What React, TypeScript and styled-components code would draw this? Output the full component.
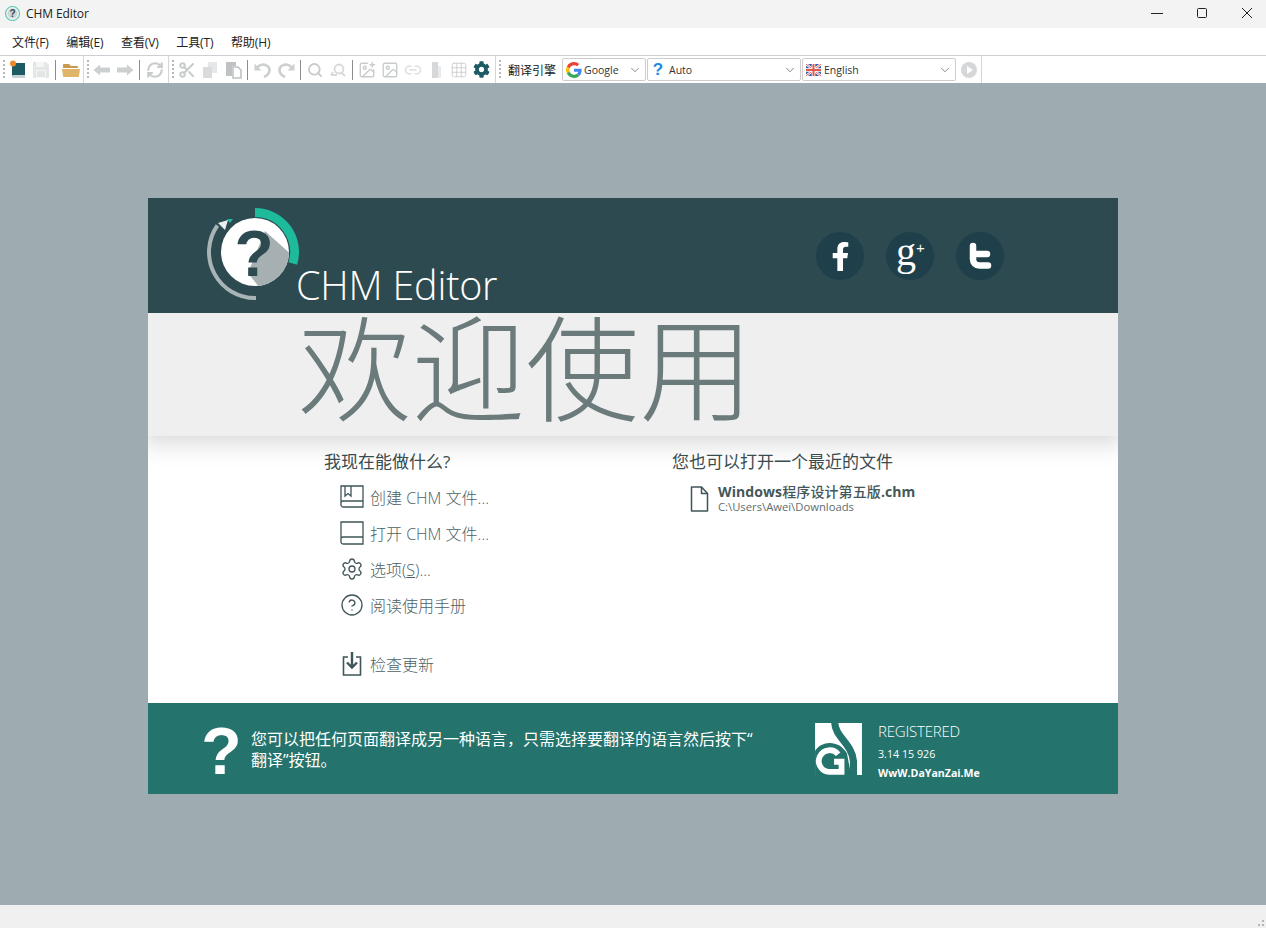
import React from "react";
import styled, { createGlobalStyle } from "styled-components";
import {
  RefreshCw, Scissors, Search, Image as ImageIcon, ImagePlus, Link2, Grid3x3, Settings, CircleHelp, ChevronDown,
} from "lucide-react";
import { FaFacebookF, FaCog } from "react-icons/fa";

const SANS = `"Open Sans", "Noto Sans CJK SC", sans-serif`;

const Global = createGlobalStyle`
  html, body { margin: 0; padding: 0; height: 100%; }
  body { font-family: ${SANS}; background: #f0f0f0; overflow: hidden; }
  #root { height: 928px; }
`;

const Win = styled.div`
  width: 1266px; height: 928px; display: flex; flex-direction: column;
`;
const TitleBar = styled.div`
  height: 28px; background: #f3f3f3; display: flex; align-items: center;
  padding: 0 3px 2px 5px; box-sizing: border-box; font-size: 12px; color: #222;
`;
const AppName = styled.span`
  margin-left: 6px; flex: 1; letter-spacing: -0.1px;
`;
const WinButtons = styled.div`
  display: flex; gap: 13px;
`;
const WinButton = styled.div`
  width: 32px; height: 24px; display: flex; align-items: center; justify-content: center;
`;
const MenuBar = styled.div`
  height: 27px; background: #fff; display: flex; align-items: center; padding-left: 4px;
  border-bottom: 1px solid #cfcfcf; box-sizing: content-box;
  font-size: 12px; color: #222; letter-spacing: -0.1px;
`;
const MenuItem = styled.span`
  padding: 0 8px; margin-right: 1.5px; white-space: nowrap;
`;
const Toolbar = styled.div`
  height: 27px; background: #fff; display: flex; box-sizing: border-box;
`;
const Band = styled.div<{ $w: number }>`
  width: ${(p) => p.$w}px; box-sizing: border-box; display: flex; align-items: center;
  border-right: 1px solid #d6d6d6; padding-left: 3px;
`;
const Grip = styled.div`
  width: 2px; height: 19px; margin-right: 1px;
  background: repeating-linear-gradient(to bottom, #b8b8b8 0 2px, transparent 2px 4px);
`;
const ToolButton = styled.div<{ $tone?: string }>`
  width: 23px; height: 24px; flex: none; display: flex; align-items: center; justify-content: center;
  color: ${(p) => p.$tone ?? "#c9cccd"};
`;
const ToolSep = styled.div<{ $r?: number }>`
  width: 1px; height: 20px; background: #8c8c8c; margin: 0 ${(p) => p.$r ?? 3}px 0 3px; flex: none;
`;
const EngineLabel = styled.span`
  font-size: 12px; color: #222; margin: 0 6px 0 6px; white-space: nowrap;
`;
const Combo = styled.div<{ $w: number }>`
  width: ${(p) => p.$w}px; height: 23px; box-sizing: border-box; flex: none;
  border: 1px solid #cdcdcd; border-radius: 2px; background: #fff; margin-right: 1px;
  display: flex; align-items: center; padding: 0 3px; font-size: 10.5px; color: #333;
`;
const ComboText = styled.span<{ $l: number }>`
  flex: 1; margin-left: ${(p) => p.$l}px;
`;
const QuestionGlyph = styled.span`
  width: 14px; text-align: center; font-family: "Liberation Sans", sans-serif; font-weight: 700; font-size: 17px;
  color: #1e88e5; line-height: 1;
`;
const Workspace = styled.div`
  flex: 1; background: #9eabb0; padding-top: 115px; display: flex; flex-direction: column; align-items: center;
`;
const Card = styled.div`
  width: 970px; height: 596px; display: flex; flex-direction: column; background: #fff;
`;
const Header = styled.div`
  height: 115px; background: #2d4a50; display: flex; padding-left: 57px; box-sizing: border-box;
`;
const Logo = styled.svg`
  width: 96px; height: 96px; margin-top: 8px; flex: none;
`;
const ProductTitle = styled.div`
  align-self: flex-end; margin-left: -5px; margin-bottom: 1px; font-size: 39.5px; font-weight: 300; color: #fff;
  line-height: 54px; letter-spacing: -0.2px;
`;
const Socials = styled.div`
  margin-left: auto; margin-right: 114px; display: flex; gap: 22px; align-items: center; padding-top: 1px;
`;
const SocialDisc = styled.div`
  width: 48px; height: 48px; border-radius: 50%; background: #1f3f4b; color: #fff;
  display: flex; align-items: center; justify-content: center;
`;
const GPlus = styled.span`
  font-family: "Liberation Serif", serif; font-size: 40px; line-height: 1; margin-top: -9px; margin-left: 1px;
  sup { font-family: "Liberation Sans", sans-serif; font-size: 15px; vertical-align: 12px; line-height: 0; }
`;
const Banner = styled.div`
  height: 123px; background: #efefef; padding-left: 150px; box-sizing: border-box; position: relative; z-index: 1;
  box-shadow: 0 0 24px 6px rgba(0, 0, 0, 0.17); clip-path: inset(0 0 -40px 0);
  font-family: "Noto Sans CJK SC", sans-serif; font-weight: 300; font-size: 113.800px; line-height: 100px; color: #6b7a7b;
  white-space: nowrap;
`;
const Content = styled.div`
  flex: 1; display: grid; grid-template-columns: 348px 1fr; padding: 14px 0 0 176px; box-sizing: border-box;
`;
const Heading = styled.div`
  font-size: 17px; line-height: 24px; color: #3b4d50; white-space: nowrap;
`;
const ActionList = styled.div`
  margin: 5px 0 0 16px; display: flex; flex-direction: column;
`;
const Action = styled.div<{ $gap?: number }>`
  height: 36px; display: flex; align-items: center; gap: 6px; font-size: 16px; color: #4d6164; white-space: nowrap;
  margin-top: ${(p) => p.$gap ?? 0}px; font-weight: 300;
  svg { width: 24px; height: 24px; flex: none; color: #3f5559; }
`;
const RecentRow = styled.div`
  display: flex; margin: 10px 0 0 18px; gap: 9px;
  svg { width: 19px; height: 26px; color: #3f5559; margin-top: 2px; flex: none; }
`;
const RecentText = styled.div`
  display: flex; flex-direction: column;
`;
const RecentName = styled.span`
  font-size: 14px; line-height: 16px; font-weight: 500; color: #44575a; white-space: nowrap; letter-spacing: 0.1px;
`;
const RecentLatin = styled.span`
  font-weight: 700;
`;
const RecentPath = styled.span`
  font-size: 11.250px; line-height: 13px; color: #5d6d6f; white-space: nowrap;
`;
const Footer = styled.div`
  height: 91px; background: #24736c; color: #fff; display: flex; align-items: center; padding-left: 49px; box-sizing: border-box;
`;
const BigQ = styled.div`
  width: 54px; font-family: "Liberation Sans", sans-serif; font-size: 66px; font-weight: 700; line-height: 67px; flex: none;
  margin-top: 5px; text-align: center; box-sizing: border-box; padding-right: 5px;
`;
const Tip = styled.div`
  width: 564px; flex: none; font-size: 16px; line-height: 21px; margin-top: 2px; white-space: nowrap;
`;
const Mark = styled.svg`
  width: 47px; height: 52px; flex: none; margin-top: 1px;
`;
const Meta = styled.div`
  margin-left: 16px; display: flex; flex-direction: column; margin-top: 6px;
`;
const Reg = styled.span`
  font-size: 15px; line-height: 20px; font-weight: 300; white-space: nowrap; letter-spacing: -0.2px;
`;
const Serial = styled.span`
  font-size: 10.700px; line-height: 20px; margin-top: 3px; white-space: nowrap;
`;
const Site = styled.span`
  font-size: 10.600px; line-height: 18px; font-weight: 700; white-space: nowrap;
`;
const StatusBar = styled.div`
  height: 22px; background: #f0f0f0; display: flex; justify-content: flex-end; align-items: flex-end; padding: 0 1px 1px 0;
`;

const BookIcon = () => (
  <svg width="18" height="19" viewBox="0 0 18 19">
    <path d="M4 3h12v12H4z" fill="#1e5a63" />
    <path d="M3 4h2v13H3z" fill="#1e5a63" />
    <path d="M4 15h12v3H5a1.500 1.500 0 0 1-1-3z" fill="#c8d2d4" />
    <circle cx="4" cy="3.500" r="3" fill="#f08a2c" />
  </svg>
);
const SaveIcon = () => (
  <svg width="18" height="18" viewBox="0 0 18 18">
    <path d="M1 1h13l3 3v13H1z" fill="#e3e5e6" />
    <path d="M4 1h8v5H4z" fill="#f4f5f5" />
    <path d="M4 9h10v8H4z" fill="#f4f5f5" />
    <path d="M5 11h8M5 13h8M5 15h8" stroke="#d4d6d7" />
  </svg>
);
const FolderIcon = () => (
  <svg width="18" height="16" viewBox="0 0 18 16">
    <path d="M1 3a1 1 0 0 1 1-1h5l2 2h6a1 1 0 0 1 1 1v1H1z" fill="#c99a4c" />
    <path d="M0 7h18l-1 7a1 1 0 0 1-1 1H2a1 1 0 0 1-1-1z" fill="#e0b469" />
  </svg>
);
const BlockArrow = ({ flip }: { flip?: boolean }) => (
  <svg width="18" height="12" viewBox="0 0 18 12" style={flip ? { transform: "scaleX(-1)" } : undefined}>
    <path d="M0.500 6L7 0.500V3.500H17V8.500H7V11.500Z" fill="#cdd0d1" />
  </svg>
);
const CopyIcon = () => (
  <svg width="18" height="18" viewBox="0 0 18 18">
    <path d="M7 1h9v11H7z" fill="#e6e7e8" />
    <path d="M2 6h9v11H2z" fill="#d9dbdc" />
  </svg>
);
const PasteIcon = () => (
  <svg width="18" height="18" viewBox="0 0 18 18">
    <path d="M2 1h10v4H8v10H2z" fill="#bfc2c3" />
    <path d="M9 6h5l3 3v8H9z" fill="#fff" stroke="#bfc2c3" strokeWidth="1.600" />
  </svg>
);
const UndoIcon = ({ flip }: { flip?: boolean }) => (
  <svg width="20" height="18" viewBox="0 0 20 18" fill="none" style={flip ? { transform: "scaleX(-1)" } : undefined}>
    <path d="M4 7C6 3.500 11 2.500 14.500 5 18 8 17 13.500 11 16" stroke="#cdd0d1" strokeWidth="2.600" />
    <path d="M1.500 2.500V9.500H8.500Z" fill="#cdd0d1" />
  </svg>
);
const ReplaceIcon = () => (
  <svg width="18" height="18" viewBox="0 0 18 18" fill="none" stroke="#d6d8d9" strokeWidth="1.800">
    <circle cx="10" cy="8" r="4.500" />
    <path d="M13 12l3 3M2 14h6M4 11l-2 3" />
  </svg>
);
const SheetIcon = () => (
  <svg width="18" height="18" viewBox="0 0 18 18">
    <path d="M5 1h6v16H5z" fill="#d6d8d9" />
    <path d="M11 5h3v12h-3z" fill="#e9eaeb" />
  </svg>
);
const GoogleIcon = () => (
  <svg width="16" height="16" viewBox="0 0 48 48">
    <path fill="#EA4335" d="M24 9.500c3.500 0 6.700 1.300 9.100 3.500l6.800-6.800C35.800 2.400 30.200 0 24 0 14.600 0 6.500 5.400 2.600 13.200l7.900 6.200C12.400 13.700 17.700 9.500 24 9.500z" />
    <path fill="#4285F4" d="M46.900 24.500c0-1.600-.2-3.100-.4-4.500H24v9h12.900c-.6 3-2.200 5.500-4.800 7.200l7.700 6c4.500-4.200 7.100-10.300 7.100-17.700z" />
    <path fill="#FBBC05" d="M10.500 28.600c-.5-1.400-.8-3-.8-4.600s.3-3.200.8-4.600l-7.900-6.200C.9 16.500 0 20.100 0 24s.9 7.500 2.600 10.800l7.900-6.200z" />
    <path fill="#34A853" d="M24 48c6.500 0 11.900-2.100 15.900-5.800l-7.700-6c-2.200 1.400-4.900 2.300-8.200 2.300-6.300 0-11.600-4.200-13.500-9.900l-7.900 6.200C6.500 42.600 14.600 48 24 48z" />
  </svg>
);
const FlagIcon = () => (
  <svg width="15" height="12" viewBox="0 0 15 12">
    <rect width="15" height="12" fill="#3a5ea8" />
    <path d="M0 0l15 12M15 0L0 12" stroke="#fff" strokeWidth="2.400" />
    <path d="M0 0l15 12M15 0L0 12" stroke="#e2574c" strokeWidth="0.900" />
    <path d="M7.500 0v12M0 6h15" stroke="#fff" strokeWidth="3.600" />
    <path d="M7.500 0v12M0 6h15" stroke="#e2574c" strokeWidth="2" />
  </svg>
);
const PlayIcon = () => (
  <svg width="18" height="18" viewBox="0 0 18 18">
    <circle cx="9" cy="9" r="8" fill="#d5d7d8" />
    <path d="M7 5l6 4-6 4z" fill="#fff" />
  </svg>
);
const TwitterT = () => (
  <svg width="26" height="28" viewBox="0 0 26 28" fill="none" stroke="#fff" strokeWidth="6.500" strokeLinecap="round" strokeLinejoin="round">
    <path d="M6 4v13c0 4 2.500 6.500 6.500 6.500H21M6 12h14" />
  </svg>
);
const NewBook = () => (
  <svg viewBox="0 0 24 24" fill="none" stroke="currentColor" strokeWidth="1.300">
    <path d="M1 18V1h22v21H3a2 2 0 0 1-2-2v-2a2 2 0 0 1 2-2h20" />
    <path d="M5 1v10l3-2.500L11 11V1" />
  </svg>
);
const OpenBook = () => (
  <svg viewBox="0 0 24 24" fill="none" stroke="currentColor" strokeWidth="1.300">
    <path d="M1 18V1h22v22H3a2 2 0 0 1-2-2v-3a2 2 0 0 1 2-2h20" />
  </svg>
);
const UpdateIcon = () => (
  <svg viewBox="0 0 24 24" fill="none" stroke="currentColor" strokeWidth="1.600">
    <path d="M8 5H3.500v18h17V5H16" />
    <path d="M12 0v15M7 10.500l5 5 5-5" strokeWidth="2.400" />
  </svg>
);
const DocIcon = () => (
  <svg viewBox="0 0 19 26" fill="none" stroke="currentColor" strokeWidth="1.500" strokeLinejoin="round">
    <path d="M1.500 1h10l6 6.500V25h-16z" />
    <path d="M11.500 1v6.500h6" />
  </svg>
);

const Emblem = () => (
  <Logo viewBox="0 0 96 96">
    <defs>
      <clipPath id="disc"><circle cx="50" cy="46" r="34" /></clipPath>
    </defs>
    <path d="M50 6.500A39.500 39.500 0 0 1 87.800 57.500" fill="none" stroke="#1dbb9c" strokeWidth="9" />
    <path d="M22 13H28L25 17Z" fill="#1dbb9c" />
    <path d="M12.400 19.500A46 46 0 0 0 51 92" fill="none" stroke="#a9b4b6" strokeWidth="4" />
    <path d="M13 17L23 14L20 24Z" fill="#e9eeee" />
    <circle cx="50" cy="46" r="34" fill="#fff" />
    <polygon points="60,25 88,50 88,86 58,86 43,67" fill="#a6b0b3" clipPath="url(#disc)" />
    <text x="49" y="70" textAnchor="middle" fontFamily="Liberation Sans" fontWeight="700" fontSize="64" fill="#2d4a50">?</text>
  </Logo>
);
const BrandMark = () => (
  <Mark viewBox="0 0 138 153">
    <rect width="138" height="153" fill="#fff" />
    <path d="M0 82C20 50 72 50 94 90L106 153H0Z" fill="#24736c" />
    <path d="M68 92A32 32 0 1 0 42 144H78V114H56" fill="none" stroke="#fff" strokeWidth="17" />
    <path d="M58 -2C58 40 108 60 113 112V155" fill="none" stroke="#24736c" strokeWidth="21" />
  </Mark>
);

const Ic = { size: 18, strokeWidth: 2.800 };

export default function App() {
  return (
    <Win>
      <Global />
      <TitleBar>
        <svg width="15" height="15" viewBox="0 0 15 15">
          <circle cx="7.500" cy="7.500" r="7" fill="none" stroke="#5fcdb8" strokeWidth="1.200" />
          <circle cx="7.500" cy="7.500" r="5" fill="#cfd6d8" />
          <text x="7.500" y="11" textAnchor="middle" fontFamily="Liberation Sans" fontWeight="700" fontSize="10" fill="#2d4a50">?</text>
        </svg>
        <AppName>CHM Editor</AppName>
        <WinButtons>
          <WinButton>
            <svg width="12" height="12" viewBox="0 0 12 12"><path d="M0 6.500h12" stroke="#222" /></svg>
          </WinButton>
          <WinButton>
            <svg width="12" height="12" viewBox="0 0 12 12"><rect x="1.500" y="1.500" width="9" height="9" rx="1" fill="none" stroke="#222" /></svg>
          </WinButton>
          <WinButton>
            <svg width="12" height="12" viewBox="0 0 12 12"><path d="M1 1l10 10M11 1L1 11" stroke="#222" /></svg>
          </WinButton>
        </WinButtons>
      </TitleBar>
      <MenuBar>
        <MenuItem>文件(F)</MenuItem>
        <MenuItem>编辑(E)</MenuItem>
        <MenuItem>查看(V)</MenuItem>
        <MenuItem>工具(T)</MenuItem>
        <MenuItem>帮助(H)</MenuItem>
      </MenuBar>
      <Toolbar>
        <Band $w={84}>
          <Grip />
          <ToolButton><BookIcon /></ToolButton>
          <ToolButton><SaveIcon /></ToolButton>
          <ToolSep />
          <ToolButton><FolderIcon /></ToolButton>
        </Band>
        <Band $w={85}>
          <Grip />
          <ToolButton><BlockArrow /></ToolButton>
          <ToolButton><BlockArrow flip /></ToolButton>
          <ToolSep />
          <ToolButton><RefreshCw {...Ic} /></ToolButton>
        </Band>
        <Band $w={327}>
          <Grip />
          <ToolButton><Scissors {...Ic} /></ToolButton>
          <ToolButton><CopyIcon /></ToolButton>
          <ToolButton><PasteIcon /></ToolButton>
          <ToolSep />
          <ToolButton><UndoIcon /></ToolButton>
          <ToolButton><UndoIcon flip /></ToolButton>
          <ToolSep $r={2} />
          <ToolButton><Search size={16} strokeWidth={2.800} /></ToolButton>
          <ToolButton><ReplaceIcon /></ToolButton>
          <ToolSep $r={2} />
          <ToolButton><ImagePlus size={18} strokeWidth={1.800} /></ToolButton>
          <ToolButton><ImageIcon size={18} strokeWidth={1.800} /></ToolButton>
          <ToolButton $tone="#dcdedf"><Link2 size={18} strokeWidth={2} /></ToolButton>
          <ToolButton><SheetIcon /></ToolButton>
          <ToolButton><Grid3x3 size={18} strokeWidth={1.200} /></ToolButton>
          <ToolButton $tone="#1d5a63"><FaCog size={17} /></ToolButton>
        </Band>
        <Band $w={486}>
          <Grip />
          <EngineLabel>翻译引擎</EngineLabel>
          <Combo $w={84}><GoogleIcon /><ComboText $l={2}>Google</ComboText><ChevronDown size={14} strokeWidth={1} /></Combo>
          <Combo $w={154}><QuestionGlyph>?</QuestionGlyph><ComboText $l={4}>Auto</ComboText><ChevronDown size={14} strokeWidth={1} /></Combo>
          <Combo $w={154}><FlagIcon /><ComboText $l={3}>English</ComboText><ChevronDown size={14} strokeWidth={1} /></Combo>
          <ToolButton><PlayIcon /></ToolButton>
        </Band>
      </Toolbar>
      <Workspace>
        <Card>
          <Header>
            <Emblem />
            <ProductTitle>CHM Editor</ProductTitle>
            <Socials>
              <SocialDisc><FaFacebookF size={29} /></SocialDisc>
              <SocialDisc><GPlus>g<sup>+</sup></GPlus></SocialDisc>
              <SocialDisc><TwitterT /></SocialDisc>
            </Socials>
          </Header>
          <Banner>欢迎使用</Banner>
          <Content>
            <div>
              <Heading>我现在能做什么?</Heading>
              <ActionList>
                <Action><NewBook /><span>创建 CHM 文件...</span></Action>
                <Action><OpenBook /><span>打开 CHM 文件...</span></Action>
                <Action><Settings strokeWidth={1.300} /><span>选项(<u>S</u>)...</span></Action>
                <Action><CircleHelp strokeWidth={1.300} /><span>阅读使用手册</span></Action>
                <Action $gap={23}><UpdateIcon /><span>检查更新</span></Action>
              </ActionList>
            </div>
            <div>
              <Heading>您也可以打开一个最近的文件</Heading>
              <RecentRow>
                <DocIcon />
                <RecentText>
                  <RecentName><RecentLatin>Windows</RecentLatin>程序设计第五版<RecentLatin>.chm</RecentLatin></RecentName>
                  <RecentPath>C:\Users\Awei\Downloads</RecentPath>
                </RecentText>
              </RecentRow>
            </div>
          </Content>
          <Footer>
            <BigQ>?</BigQ>
            <Tip>您可以把任何页面翻译成另一种语言，只需选择要翻译的语言然后按下“<br />翻译”按钮。</Tip>
            <BrandMark />
            <Meta>
              <Reg>REGISTERED</Reg>
              <Serial>3.14 15 926</Serial>
              <Site>WwW.DaYanZai.Me</Site>
            </Meta>
          </Footer>
        </Card>
      </Workspace>
      <StatusBar>
        <svg width="10" height="10" viewBox="0 0 10 10" fill="#b5b5b5">
          <rect x="7" y="7" width="2" height="2" /><rect x="3" y="7" width="2" height="2" /><rect x="7" y="3" width="2" height="2" />
        </svg>
      </StatusBar>
    </Win>
  );
}
